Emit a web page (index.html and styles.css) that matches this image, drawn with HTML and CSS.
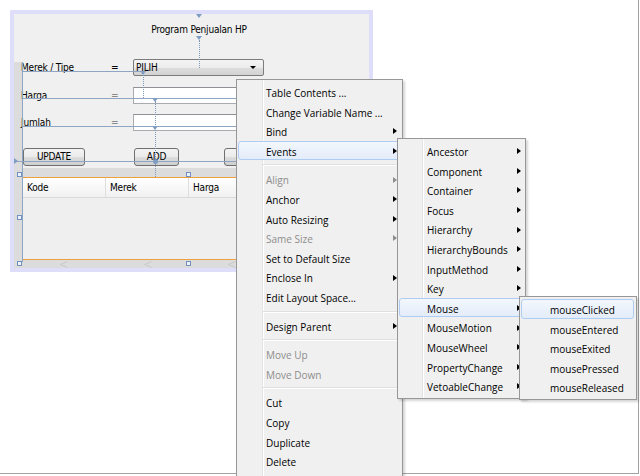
FILE: index.html
```html
<!DOCTYPE html>
<html>
<head>
<meta charset="utf-8">
<title>Designer</title>
<link rel="stylesheet" href="styles.css">
</head>
<body>
<div class="stage">
  <div class="frame">
    <div class="title">Program Penjualan HP</div>
    <div class="fields">
      <span class="lbl">Merek / Tipe</span><span class="eq">=</span>
      <div class="combo"><span class="combo-text">PILIH</span><i class="combo-arrow"></i></div>
      <span class="lbl">Harga</span><span class="eq dim">=</span><div class="field"></div>
      <span class="lbl">Jumlah</span><span class="eq dim">=</span><div class="field"></div>
    </div>
    <div class="buttons">
      <div class="btn btn-update">UPDATE</div>
      <div class="btn btn-add">ADD</div>
      <div class="btn btn-third"></div>
    </div>
    <div class="lower">
      <div class="table">
        <div class="thead">
          <div class="th">Kode</div>
          <div class="th">Merek</div>
          <div class="th">Harga</div>
          <div class="th"></div>
        </div>
      </div>
      <div class="band">
        <svg class="chev" width="8" height="7" viewBox="0 0 8 7"><polyline points="7.5,0.5 0.5,3.5 7.5,6.5" fill="none" stroke="#c9c9c9" stroke-width="1"/></svg>
        <svg class="chev" width="8" height="7" viewBox="0 0 8 7"><polyline points="7.5,0.5 0.5,3.5 7.5,6.5" fill="none" stroke="#c9c9c9" stroke-width="1"/></svg>
        <svg class="chev" width="8" height="7" viewBox="0 0 8 7"><polyline points="7.5,0.5 0.5,3.5 7.5,6.5" fill="none" stroke="#c9c9c9" stroke-width="1"/></svg>
      </div>
    </div>

    <div class="guides">
      <div class="g g-v22"></div>
      <div class="g g-h71"></div>
      <div class="g g-h98"></div>
      <div class="g g-h126"></div>
      <div class="g g-h161"></div>
      <div class="tri-right"></div>
      <div class="dot d143"></div>
      <div class="dot d155"></div>
      <div class="dot d199"></div>
      <div class="mk mk-t1"></div>
      <div class="mk mk-t2"></div>
      <div class="mk mk-71"></div>
      <div class="mk mk-98"></div>
      <div class="mk mk-126"></div>
      <div class="mk-circle"></div>
      <div class="handle h1"></div>
      <div class="handle h2"></div>
      <div class="handle h3"></div>
      <div class="handle h4"></div>
      <div class="handle h5"></div>
    </div>
  </div>

  <div class="menu menu1">
    <div class="item"><span>Table Contents ...</span></div>
    <div class="item"><span>Change Variable Name ...</span></div>
    <div class="item"><span>Bind</span><i class="arrow"></i></div>
    <div class="item hl"><span>Events</span><i class="arrow"></i></div>
    <div class="sep"></div>
    <div class="item dis"><span>Align</span><i class="arrow"></i></div>
    <div class="item"><span>Anchor</span><i class="arrow"></i></div>
    <div class="item"><span>Auto Resizing</span><i class="arrow"></i></div>
    <div class="item dis"><span>Same Size</span><i class="arrow"></i></div>
    <div class="item"><span>Set to Default Size</span></div>
    <div class="item"><span>Enclose In</span><i class="arrow"></i></div>
    <div class="item"><span>Edit Layout Space...</span></div>
    <div class="sep"></div>
    <div class="item"><span>Design Parent</span><i class="arrow"></i></div>
    <div class="sep"></div>
    <div class="item dis"><span>Move Up</span></div>
    <div class="item dis"><span>Move Down</span></div>
    <div class="sep"></div>
    <div class="item"><span>Cut</span></div>
    <div class="item"><span>Copy</span></div>
    <div class="item"><span>Duplicate</span></div>
    <div class="item"><span>Delete</span></div>
  </div>

  <div class="menu menu2">
    <div class="item"><span>Ancestor</span><i class="arrow"></i></div>
    <div class="item"><span>Component</span><i class="arrow"></i></div>
    <div class="item"><span>Container</span><i class="arrow"></i></div>
    <div class="item"><span>Focus</span><i class="arrow"></i></div>
    <div class="item"><span>Hierarchy</span><i class="arrow"></i></div>
    <div class="item"><span>HierarchyBounds</span><i class="arrow"></i></div>
    <div class="item"><span>InputMethod</span><i class="arrow"></i></div>
    <div class="item"><span>Key</span><i class="arrow"></i></div>
    <div class="item hl"><span>Mouse</span><i class="arrow"></i></div>
    <div class="item"><span>MouseMotion</span><i class="arrow"></i></div>
    <div class="item"><span>MouseWheel</span><i class="arrow"></i></div>
    <div class="item"><span>PropertyChange</span><i class="arrow"></i></div>
    <div class="item"><span>VetoableChange</span><i class="arrow"></i></div>
  </div>

  <div class="menu menu3">
    <div class="item hl"><span>mouseClicked</span></div>
    <div class="item"><span>mouseEntered</span></div>
    <div class="item"><span>mouseExited</span></div>
    <div class="item"><span>mousePressed</span></div>
    <div class="item"><span>mouseReleased</span></div>
  </div>
</div>
</body>
</html>
```

FILE: styles.css
```css
* { box-sizing: border-box; }

html, body {
  margin: 0;
  padding: 0;
  width: 640px;
  height: 476px;
  overflow: hidden;
  background: #ffffff;
}

.stage {
  position: relative;
  width: 639px;
  height: 474px;
  padding: 10px 0 0 10px;
  border-right: 1px solid #a3a3a3;
  border-bottom: 1px solid #a3a3a3;
  font-family: "DejaVu Sans Condensed", "Liberation Sans", sans-serif;
  font-size: 10px;
  letter-spacing: -0.2px;
  color: #000;
}

/* ---------- designer form ---------- */
.frame {
  position: relative;
  width: 363px;
  height: 262px;
  border: 4px solid #dedefb;
  background: linear-gradient(#dcdcdc, #dcdcdc) 0 48px / 8px 120px no-repeat, #f0f0f0;
}

.title {
  margin-left: 85px;
  width: 200px;
  height: 45px;
  padding-top: 9.5px;
  line-height: 12px;
  text-align: center;
  white-space: nowrap;
}

.fields {
  display: grid;
  grid-template-columns: 90px 22px 131px;
  grid-template-rows: 17px 17px 17px;
  row-gap: 10.5px;
  margin-left: 7px;
}

.lbl, .eq {
  line-height: 17px;
  white-space: nowrap;
}

.eq.dim { color: #8c8c8c; }

.combo {
  display: flex;
  align-items: center;
  justify-content: space-between;
  border: 1px solid #7c7c7c;
  border-radius: 2px;
  padding: 0 7px 0 2px;
  background: linear-gradient(#f4f4f4 0%, #ececec 50%, #dedede 51%, #d2d2d2 100%);
}

.combo-text { line-height: 15px; }

.combo-arrow {
  width: 0;
  height: 0;
  border-top: 3px solid #000;
  border-left: 3px solid transparent;
  border-right: 3px solid transparent;
}

.field {
  background: #ffffff;
  border: 1px solid #a9abb1;
  border-top-color: #8e9096;
}

.buttons {
  display: flex;
  margin-top: 17px;
  height: 18px;
}

.btn {
  height: 18px;
  border: 1px solid #707070;
  border-radius: 3px;
  background: linear-gradient(#f3f3f3 0%, #ebebeb 50%, #dddddd 51%, #cfcfcf 100%);
  line-height: 16px;
  text-align: center;
  white-space: nowrap;
  overflow: hidden;
}

.btn-update { margin-left: 9px; width: 62px; }
.btn-add { margin-left: 49px; width: 45px; }
.btn-third { margin-left: 45px; width: 62px; }

.lower {
  margin-top: 2px;
  height: 100px;
  padding: 9px 0 0 8px;
  background: #dcdcdc;
}

.table {
  height: 83px;
  border: 1px solid #eea03c;
  background: #efefef;
}

.thead {
  display: flex;
  height: 20px;
  background: linear-gradient(#ffffff, #f1f1f1);
  border-bottom: 1px solid #dadada;
}

.th {
  width: 83px;
  flex: none;
  padding-left: 4px;
  line-height: 19px;
  border-right: 1px solid #dedede;
}

.band {
  display: flex;
  align-items: center;
  gap: 76px;
  height: 8px;
  padding-left: 38px;
}

.chev { display: block; }

/* ---------- layout guides (overlay) ---------- */
.guides {
  position: absolute;
  inset: 0;
  pointer-events: none;
}

.g { position: absolute; background: #8ea6c4; }
.g-v22 { left: 8px; top: 48px; width: 1px; height: 200px; }
.g-h71 { left: 8px; top: 57px; width: 123px; height: 1px; }
.g-h98 { left: 8px; top: 84px; width: 290px; height: 1px; }
.g-h126 { left: 8px; top: 112px; width: 290px; height: 1px; }
.g-h161 { left: 3px; top: 147px; width: 295px; height: 1px; }

.tri-right {
  position: absolute;
  left: 0;
  top: 144px;
  width: 0;
  height: 0;
  border-left: 4px solid #7f9cc3;
  border-top: 3px solid transparent;
  border-bottom: 3px solid transparent;
}

.dot {
  position: absolute;
  width: 1px;
  border-left: 1px dotted #7f98b8;
}
.d143 { left: 129px; top: 58px; height: 26px; }
.d155 { left: 141px; top: 87px; height: 76px; }
.d199 { left: 185px; top: 26px; height: 28px; }

.mk {
  position: absolute;
  width: 0;
  height: 0;
  border-top: 4px solid #7f9cc3;
  border-left: 3px solid transparent;
  border-right: 3px solid transparent;
}
.mk-t1 { left: 182px; top: 0; }
.mk-t2 { left: 182px; top: 22px; }
.mk-71 { left: 126px; top: 57px; }
.mk-98 { left: 138px; top: 84px; }
.mk-126 { left: 138px; top: 112px; }

.mk-circle {
  position: absolute;
  left: 139px;
  top: 145px;
  width: 5px;
  height: 5px;
  border-radius: 50%;
  background: #7f9cc3;
}

.handle {
  position: absolute;
  width: 5px;
  height: 5px;
  border: 1px solid #7290bd;
  background: #eef3fb;
}
.h1 { left: 3px; top: 158px; }
.h2 { left: 172px; top: 158px; }
.h3 { left: 3px; top: 201px; }
.h4 { left: 3px; top: 247px; }
.h5 { left: 172px; top: 247px; }

/* ---------- popup menus ---------- */
.menu {
  position: absolute;
  padding: 2px 0;
  border: 1px solid #979797;
  background-color: #f0f0f0;
  box-shadow: 2px 2px 2px rgba(0, 0, 0, 0.16);
  font-family: "Open Sans", "Noto Sans", sans-serif;
  font-size: 10px;
  letter-spacing: 0;
  color: #000;
}

.menu1 {
  left: 236px;
  top: 79px;
  width: 167px;
  padding-bottom: 12px;
  background-image: linear-gradient(to right, transparent 25px, #e2e3e3 25px, #e2e3e3 26px, #ffffff 26px, #ffffff 27px, transparent 27px);
}

.menu2 {
  left: 397px;
  top: 138px;
  width: 129px;
  background-image: linear-gradient(to right, transparent 24px, #e2e3e3 24px, #e2e3e3 25px, #ffffff 25px, #ffffff 26px, transparent 26px);
}

.menu3 {
  left: 519px;
  top: 296px;
  width: 118px;
}

.item {
  display: flex;
  align-items: center;
  justify-content: space-between;
  height: 19.6px;
  margin: 0 1px;
  padding: 3px 3px 0 27px;
  border: 1px solid transparent;
  border-radius: 3px;
  line-height: 14.6px;
  white-space: nowrap;
}

.menu2 .item { padding-right: 2px; }
.menu3 .item { padding-left: 28px; margin-right: 2px; }

.item.dis { color: #8d8d8d; }

.item.hl {
  border-color: #afcdf2;
  background: linear-gradient(#f3f7fd, #e3ecf9);
}

.arrow {
  flex: none;
  width: 0;
  height: 0;
  margin-bottom: 2px;
  border-left: 4px solid currentColor;
  border-top: 3.5px solid transparent;
  border-bottom: 3.5px solid transparent;
}

.sep {
  height: 9px;
  margin: 0 1px 0 26px;
  background: linear-gradient(transparent 4px, #e0e0e0 4px, #e0e0e0 5px, #ffffff 5px, #ffffff 6px, transparent 6px);
}
```
